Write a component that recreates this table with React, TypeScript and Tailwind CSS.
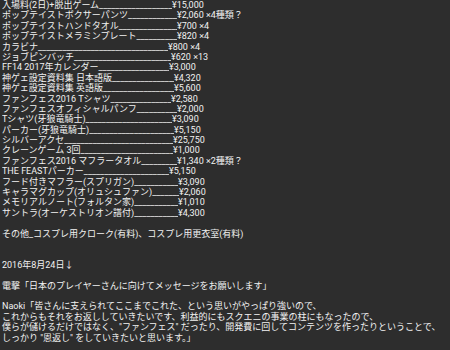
import React from "react";

const items: [string, number, string][] = [
  ["入場料(2日)+脱出ゲーム", 172, "¥15,000"],
  ["ポップテイストボクサーパンツ", 177, "¥2,060 ×4種類？"],
  ["ポップテイストハンドタオル", 177, "¥700 ×4"],
  ["ポップテイストメラミンプレート", 177, "¥820 ×4"],
  ["カラビナ", 168, "¥800 ×4"],
  ["ジョブピンバッチ", 171, "¥620 ×13"],
  ["FF14 2017年カレンダー", 169, "¥3,000"],
  ["神ゲェ設定資料集 日本語版", 174, "¥4,320"],
  ["神ゲェ設定資料集 英語版", 174, "¥5,600"],
  ["ファンフェス2016 Tシャツ", 171, "¥2,580"],
  ["ファンフェスオフィシャルパンフ", 177, "¥2,000"],
  ["Tシャツ(牙狼竜騎士)", 172, "¥3,090"],
  ["パーカー(牙狼竜騎士)", 174, "¥5,150"],
  ["シルバーアクセ", 173, "¥25,750"],
  ["クレーンゲーム 3回", 173, "¥1,000"],
  ["ファンフェス2016 マフラータオル", 177, "¥1,340 ×2種類？"],
  ["THE FEASTパーカー", 169, "¥5,150"],
  ["フード付きマフラー(スプリガン)", 178, "¥3,090"],
  ["キャラマグカップ(オリュシュファン)", 179, "¥2,060"],
  ["メモリアルノート(フォルタン家)", 178, "¥1,010"],
  ["サントラ(オーケストリオン譜付)", 178, "¥4,300"],
];

const UNDERS = "_".repeat(60);

export default function App() {
  return (
    <div
      className="w-[450px] h-[350px] overflow-hidden bg-[#2d2d2d] text-[#f2f2f2] text-[9px] leading-[10.4px] pl-[2px] whitespace-nowrap"
      style={{ fontFamily: 'Roboto, "Noto Sans CJK JP", sans-serif' }}
    >
      {items.map(([label, x, price], i) => (
        <div key={i} className="flex h-[10.4px]">
          <span className="block shrink-0 overflow-hidden" style={{ width: x - 2 }}>
            {label}
            {UNDERS}
          </span>
          <span>{price}</span>
        </div>
      ))}
      <div className="h-[10.4px]" />
      <div>その他_コスプレ用クローク(有料)、コスプレ用更衣室(有料)</div>
      <div className="h-[20.8px]" />
      <div>2016年8月24日↓</div>
      <div className="h-[10.4px]" />
      <div>電撃「日本のプレイヤーさんに向けてメッセージをお願いします」</div>
      <div className="h-[10.4px]" />
      <div>Naoki「皆さんに支えられてここまでこれた、という思いがやっぱり強いので、</div>
      <div>これからもそれをお返ししていきたいです、利益的にもスクエニの事業の柱にもなったので、</div>
      <div>僕らが儲けるだけではなく、"ファンフェス" だったり、開発費に回してコンテンツを作ったりということで、</div>
      <div>しっかり "恩返し" をしていきたいと思います。」</div>
    </div>
  );
}
